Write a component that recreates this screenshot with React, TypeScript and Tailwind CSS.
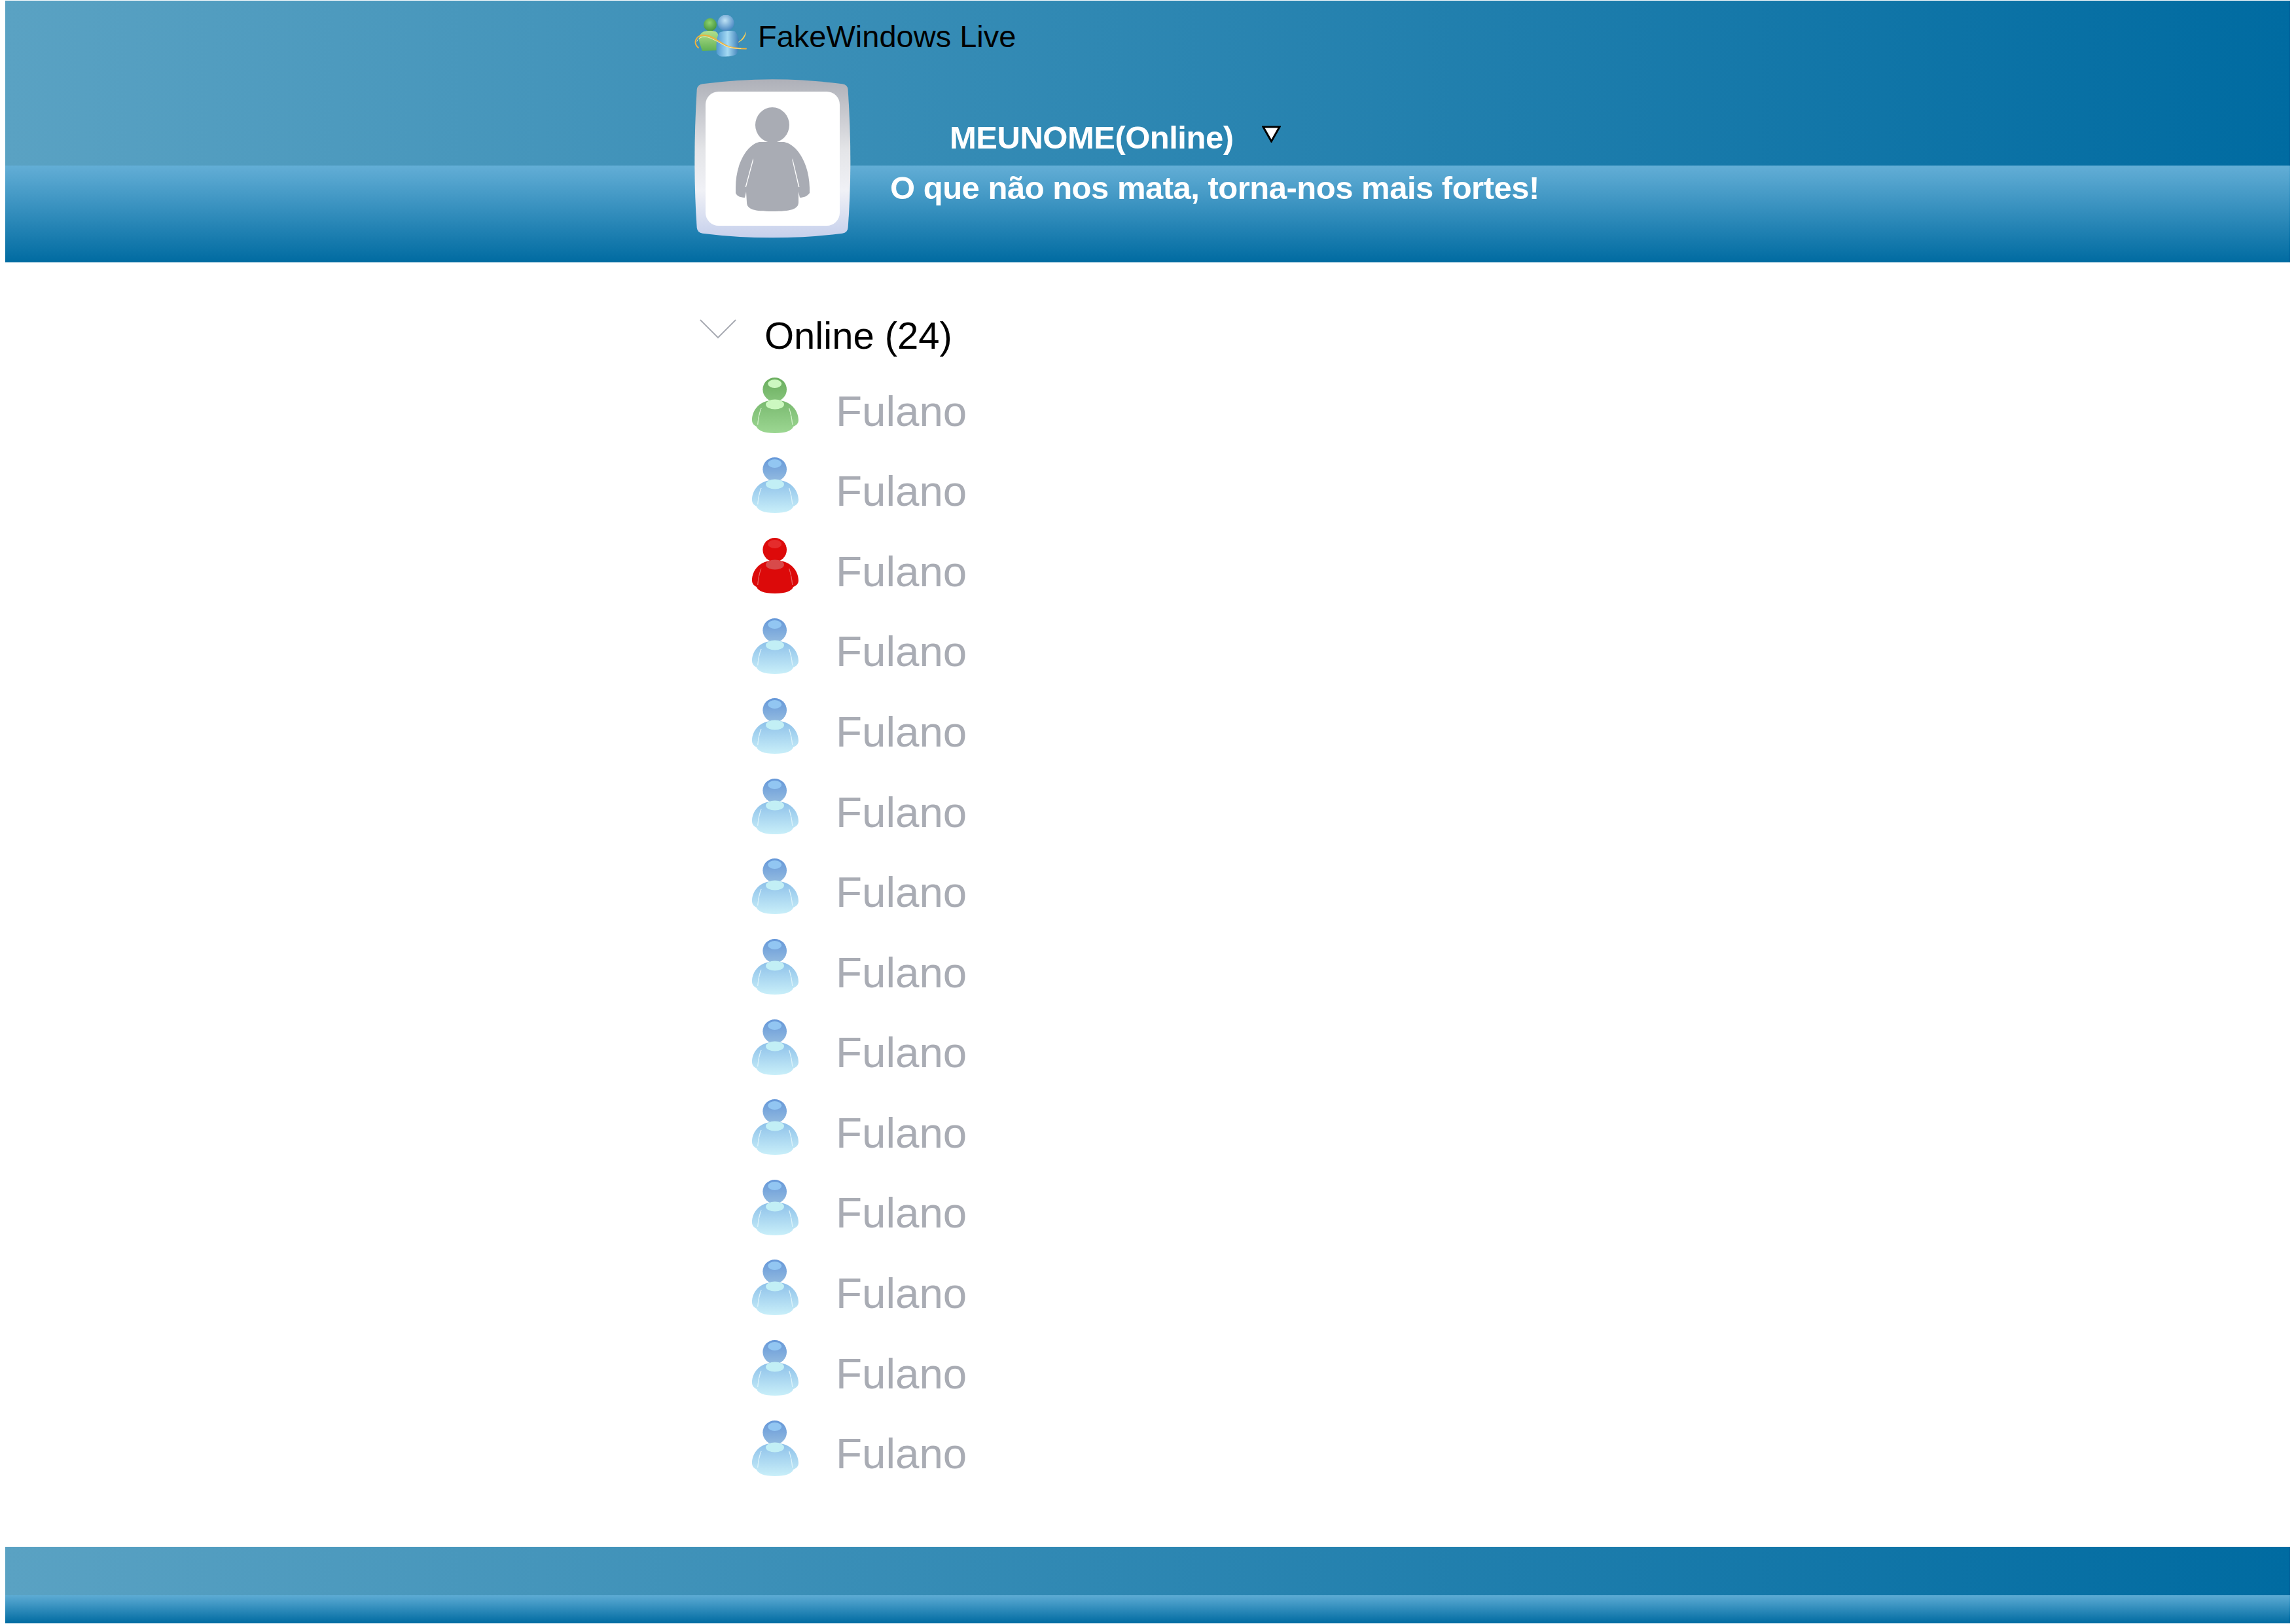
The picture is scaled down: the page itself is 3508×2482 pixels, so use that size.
import React from 'react';

const palettes = {
  green: { id: 'g', head: ['#69ad5d', '#86c47b'], body: ['#79b96f', '#9cd792'], headShine: '#ccf8c0', bodyShine: '#ccf8c0', line: '#d8f5d0' },
  blue: { id: 'b', head: ['#6597d8', '#93bbe0'], body: ['#8dc0e9', '#c9eff9'], headShine: '#92c6f2', bodyShine: '#c2eff5', line: '#dff5fb' },
  red: { id: 'r', head: ['#dd0a0a', '#dd0a0a'], body: ['#dc0a0a', '#dc0a0a'], headShine: '#e52c2c', bodyShine: '#d84a4a', line: '#e86a6a' },
};

type Status = keyof typeof palettes;

const StatusIcon: React.FC<{ status: Status; uid: number }> = ({ status, uid }) => {
  const p = palettes[status];
  const headId = `head-${p.id}-${uid}`;
  const bodyId = `body-${p.id}-${uid}`;
  return (
    <svg width="71" height="85" viewBox="0 0 71 85" className="shrink-0">
      <defs>
        <linearGradient id={headId} x1="0" y1="0" x2="0" y2="1">
          <stop offset="0" stopColor={p.head[0]} />
          <stop offset="1" stopColor={p.head[1]} />
        </linearGradient>
        <linearGradient id={bodyId} x1="0" y1="0" x2="0" y2="1">
          <stop offset="0" stopColor={p.body[0]} />
          <stop offset="1" stopColor={p.body[1]} />
        </linearGradient>
      </defs>
      <circle cx="34.7" cy="18.3" r="18.3" fill={`url(#${headId})`} />
      <ellipse cx="34.7" cy="9.5" rx="10.5" ry="6.5" fill={p.headShine} />
      <path
        d="M35 35C55 33 71 48 71 65C71 70 68 73 63 75C61 81 52 85 35 85C18 85 9 81 7 75C3 73 0 70 0 65C0 48 15 33 35 35Z"
        fill={`url(#${bodyId})`}
      />
      <ellipse cx="35" cy="41" rx="14" ry="7.5" fill={p.bodyShine} />
      <path d="M14 47C11 54 9.5 62 8.7 72C9.6 62 11.3 54 14 47Z" fill="none" stroke={p.line} strokeWidth="0.8" />
      <path d="M56.6 47C59 54 60.8 62 61.7 72C60.8 62 59 54 56.6 47Z" fill="none" stroke={p.line} strokeWidth="0.8" />
    </svg>
  );
};

const Logo = () => (
  <svg width="85" height="65" viewBox="10 8 85 65" className="shrink-0">
    <defs>
      <radialGradient id="logo-green-head" cx="0.45" cy="0.35" r="0.7">
        <stop offset="0" stopColor="#8fd46e" />
        <stop offset="1" stopColor="#3f8f3c" />
      </radialGradient>
      <linearGradient id="logo-green-body" x1="0" y1="0" x2="0" y2="1">
        <stop offset="0" stopColor="#b4e08e" />
        <stop offset="1" stopColor="#5fb052" />
      </linearGradient>
      <radialGradient id="logo-blue-head" cx="0.45" cy="0.35" r="0.7">
        <stop offset="0" stopColor="#bfe2f5" />
        <stop offset="1" stopColor="#3f80bd" />
      </radialGradient>
      <linearGradient id="logo-blue-body" x1="0" y1="0" x2="1" y2="0">
        <stop offset="0" stopColor="#4e98d0" />
        <stop offset="0.5" stopColor="#a5daf3" />
        <stop offset="1" stopColor="#3a7cb6" />
      </linearGradient>
    </defs>
    <circle cx="35" cy="22.7" r="10" fill="url(#logo-green-head)" />
    <path d="M26 33C30 31.5 39 31.5 43 33C47 35 49 40 48 50L45 62L23 63C21 56 18 50 18 45C18 39 21 35 26 33Z" fill="url(#logo-green-body)" />
    <circle cx="59" cy="20" r="12.5" fill="url(#logo-blue-head)" />
    <path d="M49 35C54 32 67 31 73 33C77 38 80 46 79 53C78 60 77 65 75 68C68 72 54 72 50 71L45 67C44 58 44 42 49 35Z" fill="url(#logo-blue-body)" />
    <path d="M17 58C12 54 11 48 15 43C19 38 26 38 33 40C42 43 50 50 60 55C68 59 78 59.5 90 59.5" fill="none" stroke="#eeb23e" strokeWidth="2" strokeLinecap="round" />
    <path d="M15 48C16 44 21 41 28 41C38 43 48 50 58 55C66 58.5 74 59 82 59.3" fill="none" stroke="#fff3b8" strokeWidth="0.9" strokeLinecap="round" />
    <path d="M78 49C83 46 87 40 90 33C90 41 85 47 78 50Z" fill="#f0cb5c" />
  </svg>
);

const Avatar = () => (
  <svg width="241" height="243" viewBox="0 0 241 243" className="shrink-0">
    <defs>
      <linearGradient id="frame" x1="0" y1="0" x2="0" y2="1">
        <stop offset="0" stopColor="#aeb0b8" />
        <stop offset="0.45" stopColor="#e4e5e8" />
        <stop offset="0.7" stopColor="#f0f1f6" />
        <stop offset="1" stopColor="#c6d0ec" />
      </linearGradient>
    </defs>
    <path
      d="M13.4 7.3Q120 -7 227 7.3Q235 8.5 235.6 16Q243 129 235.6 227Q235 234.5 227 235.7Q120 249 13.4 235.7Q5.5 234.5 4.7 227Q-2 129 4.7 16Q5.5 8.5 13.4 7.3Z"
      fill="url(#frame)"
    />
    <rect x="18" y="19" width="205" height="205" rx="20" fill="#ffffff" />
    <ellipse cx="120" cy="70" rx="26" ry="27" fill="#a9acb4" />
    <path
      d="M100 96L138 96C158 100 176 128 177 166L177 174C173 179 168 181 162 181L160 172L160 188C160 199 148 202 120 202C92 202 81 199 81 188L80 172L78 181C72 181 66 179 64 174L64 166C64 128 82 100 100 96Z"
      fill="#a9acb4"
    />
    <path d="M90.5 121L78.6 165L80 165L91 124Z" fill="#ffffff" />
    <path d="M151 121L161.5 165L160 165L150.5 124Z" fill="#ffffff" />
  </svg>
);

const contacts: Status[] = ['green', 'blue', 'red', 'blue', 'blue', 'blue', 'blue', 'blue', 'blue', 'blue', 'blue', 'blue', 'blue', 'blue'];

export default function App() {
  return (
    <div className="h-[2482px] bg-white pl-[8px] pr-[9px] pt-px pb-px flex flex-col [font-family:'Liberation_Sans',Arial,sans-serif]">
      {/* Header */}
      <header className="h-[400px] shrink-0 pl-[1052px] pt-[22px] bg-[linear-gradient(to_bottom,transparent_252px,#63aed6_252px,#006ba1_100%),linear-gradient(to_right,#5aa2c3,#006ba1)]">
        <div className="flex items-center h-[65px]">
          <Logo />
          <span className="ml-[13px] text-[47px] leading-none text-black">FakeWindows Live</span>
        </div>
        <div className="flex mt-[33px]">
          <Avatar />
          <div className="ml-[59px] pt-[51px] text-white font-bold text-[49px] tracking-[-0.5px] leading-[77px]">
            <div className="flex items-start pl-[91px]">
              <span>MEUNOME(Online)</span>
              <svg width="29" height="26" viewBox="0 0 29 26" className="ml-[44px] mt-[20px]">
                <path d="M2 2H27L14.5 24Z" fill="#ffffff" stroke="#000000" strokeWidth="3" />
              </svg>
            </div>
            <div>O que não nos mata, torna-nos mais fortes!</div>
          </div>
        </div>
      </header>

      {/* Contact list */}
      <main className="flex-1 pt-[77px] pl-[1061px]">
        <div className="flex items-start gap-[43px] text-[58px] leading-[70px] text-black">
          <svg width="56" height="30" viewBox="0 0 56 30" className="mt-[10px]">
            <path d="M1 1L28 28L55 1" fill="none" stroke="#a9acb4" strokeWidth="2" />
          </svg>
          <span>Online (24)</span>
        </div>
        <ul className="mt-[10px] pl-[80px]">
          {contacts.map((status, idx) => (
            <li key={idx} className="flex items-center h-[122.6px] gap-[57px]">
              <StatusIcon status={status} uid={idx} />
              <span className="pt-[18px] text-[65.5px] leading-none text-[#a9acb4]">Fulano</span>
            </li>
          ))}
        </ul>
      </main>

      {/* Footer */}
      <footer className="h-[117px] shrink-0 bg-[linear-gradient(to_bottom,transparent_74px,#5dabd4_74px,#006ba1_100%),linear-gradient(to_right,#5aa2c3,#006ba1)]" />
    </div>
  );
}
